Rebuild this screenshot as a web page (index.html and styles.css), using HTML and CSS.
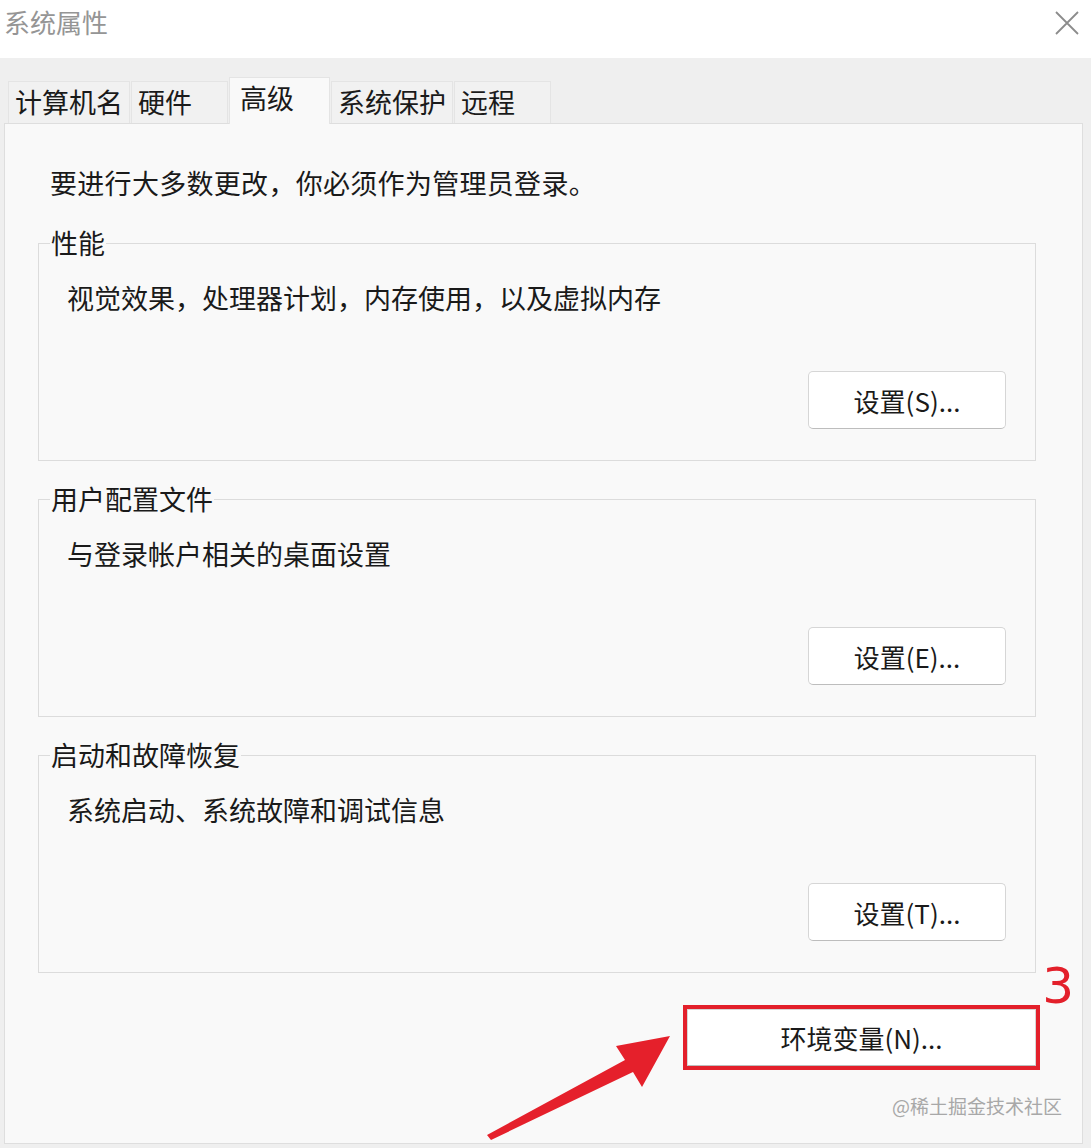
FILE: index.html
```html
<!DOCTYPE html>
<html lang="zh-CN">
<head>
    <meta charset="UTF-8">
    <title>系统属性</title>
    <link rel="stylesheet" href="styles.css">
</head>
<body>
    <div class="titlebar">
        <span class="title">系统属性</span>
        <svg class="close" width="24" height="24" viewBox="0 0 24 24">
            <path d="M1 1 L23 23 M23 1 L1 23" stroke="#8c8c8c" stroke-width="1.8" fill="none"/>
        </svg>
    </div>

    <div class="tabs">
        <div class="tab">计算机名</div>
        <div class="tab">硬件</div>
        <div class="tab active">高级</div>
        <div class="tab">系统保护</div>
        <div class="tab">远程</div>
    </div>

    <div class="panel">
        <p class="intro">要进行大多数更改，你必须作为管理员登录。</p>

        <fieldset class="group">
            <legend>性能</legend>
            <p class="desc">视觉效果，处理器计划，内存使用，以及虚拟内存</p>
            <div class="actions"><button class="btn">设置(S)...</button></div>
        </fieldset>

        <fieldset class="group">
            <legend>用户配置文件</legend>
            <p class="desc">与登录帐户相关的桌面设置</p>
            <div class="actions"><button class="btn">设置(E)...</button></div>
        </fieldset>

        <fieldset class="group">
            <legend>启动和故障恢复</legend>
            <p class="desc">系统启动、系统故障和调试信息</p>
            <div class="actions"><button class="btn">设置(T)...</button></div>
        </fieldset>

        <div class="env-row">
            <button class="btn env highlight">环境变量(N)...</button>
            <span class="step">3</span>
        </div>

        <div class="watermark">@稀土掘金技术社区</div>
    </div>

    <!-- annotation arrow -->
    <svg class="arrow" width="1091" height="1148" viewBox="0 0 1091 1148">
        <polygon points="487,1135 625,1060 616,1046 670,1036 642,1087 633,1072 491,1140" fill="#e5202b"/>
    </svg>
</body>
</html>
```

FILE: styles.css
```css
* {
    box-sizing: border-box;
}
html, body {
    margin: 0;
    padding: 0;
}
body {
    width: 1091px;
    height: 1148px;
    background-color: #efefef;
    font-family: "Noto Sans CJK SC", "Noto Sans", sans-serif;
    color: #1a1a1a;
    position: relative;
    overflow: hidden;
}
.titlebar {
    height: 58px;
    background-color: #fff;
    display: flex;
    align-items: center;
    justify-content: space-between;
    padding: 0 12px 0 4px;
}
.title {
    font-size: 26px;
    line-height: 36px;
    color: #959595;
    margin-top: -14px;
}
.close {
    margin-top: -12px;
}
.tabs {
    display: flex;
    align-items: flex-end;
    gap: 1px;
    padding-left: 8px;
    margin-top: 19px;
    position: relative;
    z-index: 1;
}
.tab {
    height: 42px;
    min-width: 97px;
    padding: 0 6px;
    font-size: 27px;
    line-height: 40px;
    background-color: #f1f1f1;
    border: 1px solid #e4e4e4;
    border-bottom: none;
}
.tab.active {
    height: 47px;
    min-width: 101px;
    padding: 0 10px;
    line-height: 40px;
    background-color: #f9f9f9;
    margin-bottom: -1px;
}
.panel {
    margin-left: 4px;
    width: 1079px;
    height: 1021px;
    background-color: #f9f9f9;
    border: 1px solid #dedede;
    padding: 41px 46px 0 33px;
    position: relative;
}
.intro {
    margin: 0 0 24px 12px;
    font-size: 27px;
    line-height: 36px;
    letter-spacing: 0.3px;
}
.group {
    margin: 0 0 20px 0;
    padding: 19px 29px 31px 11px;
    border: 1px solid #dcdcdc;
    min-width: 0;
}
.group legend {
    padding: 0 1px;
    font-size: 27px;
    line-height: 36px;
}
.desc {
    margin: 0 0 0 17px;
    font-size: 27px;
    line-height: 36px;
}
.actions {
    display: flex;
    justify-content: flex-end;
    margin-top: 55px;
}
.btn {
    width: 198px;
    height: 58px;
    background-color: #fff;
    border: 1px solid #d6d6d6;
    border-bottom-color: #bdbdbd;
    border-radius: 5px;
    font-family: inherit;
    font-size: 26px;
    color: #1a1a1a;
    padding: 0;
}
.env-row {
    display: flex;
    justify-content: flex-end;
    margin-top: 36px;
    position: relative;
}
.btn.env {
    width: 349px;
    height: 57px;
    border-radius: 0;
}
.highlight {
    outline: 4px solid #e3202b;
}
.step {
    position: absolute;
    right: -38px;
    top: -48px;
    font-family: "DejaVu Sans", sans-serif;
    font-size: 50px;
    line-height: 50px;
    color: #e3202b;
}
.watermark {
    text-align: right;
    margin: 28px -26px 0 0;
    font-size: 19px;
    line-height: 24px;
    color: #a8a8a8;
}
.arrow {
    position: absolute;
    top: 0;
    left: 0;
    pointer-events: none;
}
```
